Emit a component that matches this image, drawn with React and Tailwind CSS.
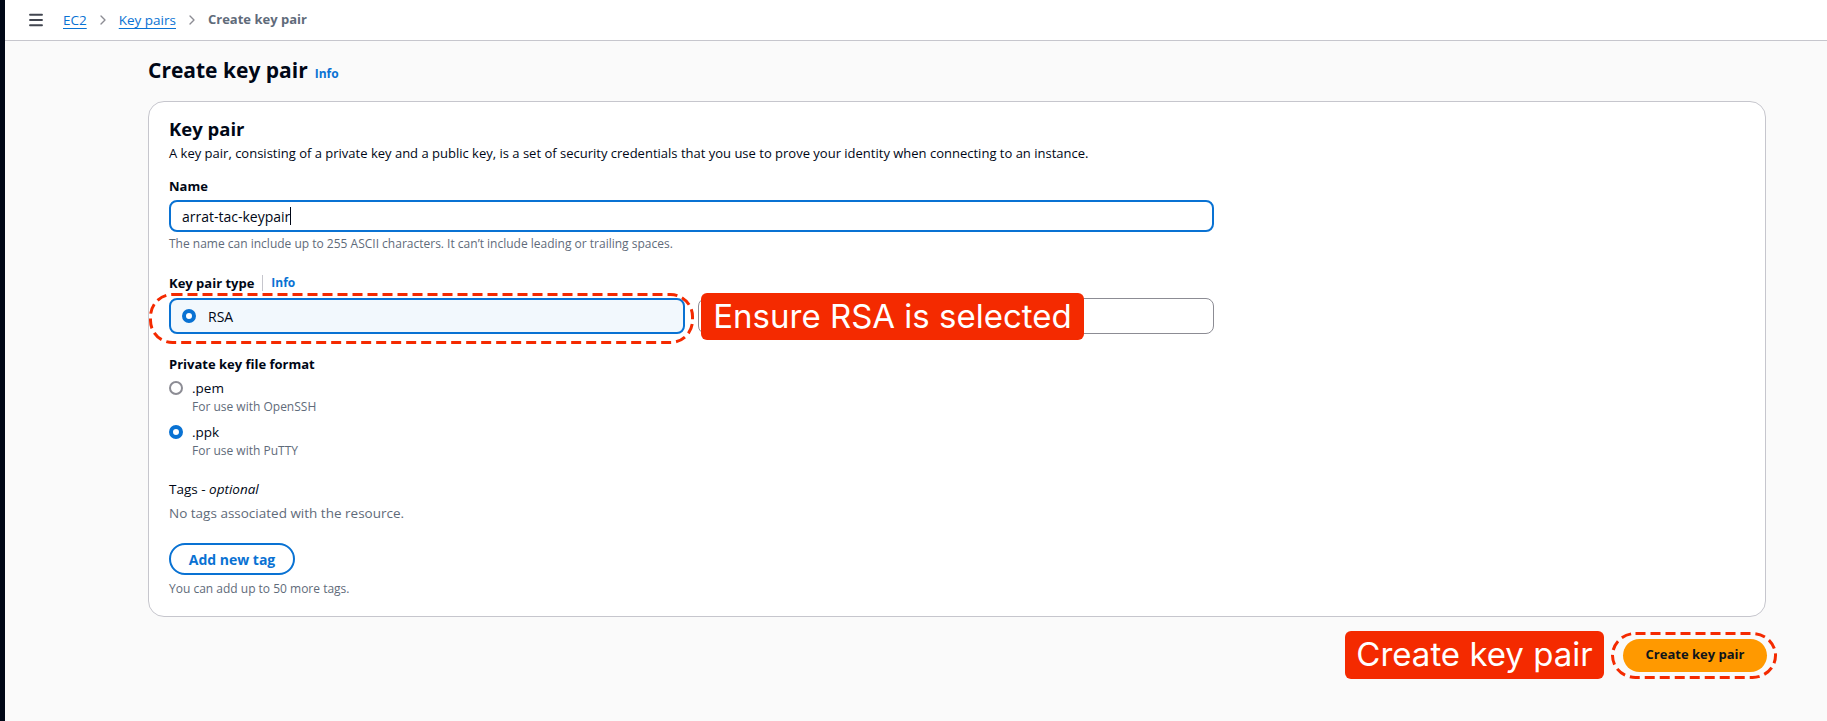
import React from 'react'
import { ChevronRight, Menu } from 'lucide-react'

const Dashed = ({ w, h, r }) => (
  <svg width={w} height={h} className="block">
    <rect
      x="1.5"
      y="1.5"
      width={w - 3}
      height={h - 3}
      rx={r}
      fill="none"
      stroke="#f42a00"
      strokeWidth="3"
      strokeDasharray="10 5"
    />
  </svg>
)

const Radio = ({ checked }) =>
  checked ? (
    <span className="block w-[14px] h-[14px] shrink-0 rounded-full border-[4px] border-[#0972d3] bg-white" />
  ) : (
    <span className="block w-[14px] h-[14px] shrink-0 rounded-full border-2 border-[#8c8c94] bg-white" />
  )

const App = () => {
  const crumbs = [
    { label: 'EC2', link: true },
    { label: 'Key pairs', link: true },
    { label: 'Create key pair', link: false },
  ]

  const formats = [
    { label: '.pem', hint: 'For use with OpenSSH', checked: false },
    { label: '.ppk', hint: 'For use with PuTTY', checked: true },
  ]

  return (
    <div className="flex min-h-[721px] w-full bg-[#fafafa] text-[#000716] font-['Open_Sans',sans-serif]">
      <div className="w-[5px] shrink-0 bg-[#000716]" />

      <div className="flex-1 flex flex-col">
        {/* top bar */}
        <header className="h-[41px] bg-white border-b border-[#c6c6cd] flex items-center pl-[22px]">
          <Menu className="w-[18px] h-[18px] text-[#424650]" strokeWidth={2.5} />
          <nav className="flex items-center ml-[18px] text-[13.5px]">
            {crumbs.map((c, i) => (
              <React.Fragment key={c.label}>
                {i > 0 && <ChevronRight className="w-[16px] h-[16px] mx-[8px] text-[#8c8c94]" strokeWidth={2} />}
                {c.link ? (
                  <span className="text-[#0972d3] underline underline-offset-[3px]">{c.label}</span>
                ) : (
                  <span className="text-[#5f6b7a] font-bold text-[13px]">{c.label}</span>
                )}
              </React.Fragment>
            ))}
          </nav>
        </header>

        <main className="pl-[143px] pr-[61px] pt-[15px]">
          <div className="flex items-baseline gap-[7px]">
            <h1 className="text-[21px] leading-[28px] font-bold">Create key pair</h1>
            <span className="text-[12px] font-bold text-[#0972d3]">Info</span>
          </div>

          {/* card */}
          <section className="mt-[17px] bg-white border border-[#c6c6cd] rounded-[16px] px-[20px] pt-[15px] pb-[19px]">
            <h2 className="text-[18.5px] leading-[24px] font-bold">Key pair</h2>
            <p className="mt-[2px] text-[13px] leading-[20px]">
              A key pair, consisting of a private key and a public key, is a set of security credentials that you use to prove your identity when connecting to an instance.
            </p>

            <div className="mt-[13px] text-[13px] leading-[20px] font-bold">Name</div>
            <div className="mt-[4px] w-[1045px] h-[32px] rounded-[8px] border-2 border-[#0972d3] flex items-center pl-[11px] text-[14px]">
              <span>arrat-tac-keypair</span>
              <span className="inline-block w-px h-[18px] bg-[#000716]" />
            </div>
            <div className="mt-[4px] text-[12px] leading-[16px] text-[#5f6b7a]">
              The name can include up to 255 ASCII characters. It can’t include leading or trailing spaces.
            </div>

            <div className="mt-[21px] flex items-center text-[13px] leading-[20px]">
              <span className="font-bold">Key pair type</span>
              <span className="mx-[8px] w-px h-[16px] bg-[#c6c6cd]" />
              <span className="text-[12px] font-bold text-[#0972d3]">Info</span>
            </div>
            <div className="relative mt-[5px] w-[1045px] grid grid-cols-2 gap-[13px]">
              <div className="h-[36px] rounded-[8px] border-2 border-[#0972d3] bg-[#f2f8fd] flex items-center pl-[11px] gap-[12px] text-[14px]">
                <Radio checked />
                <span>RSA</span>
              </div>
              {/* second option sits under the callout */}
              <div className="h-[36px] rounded-[8px] border border-[#8c8c94] bg-white" />

              {/* annotations */}
              <div className="absolute left-[-20px] top-[-5px]">
                <Dashed w={545} h={51} r={22} />
              </div>
              <div className="absolute left-[532px] top-[-5px] w-[383px] h-[47px] rounded-[6px] bg-[#f42a00] text-white flex items-center justify-center text-[33px] font-['Inter',sans-serif]">
                Ensure RSA is selected
              </div>
            </div>

            <div className="mt-[20px] text-[13px] leading-[20px] font-bold">Private key file format</div>
            <div className="mt-[4px] flex flex-col gap-[7px]">
              {formats.map((f) => (
                <div key={f.label}>
                  <div className="flex items-center gap-[9px] text-[13.5px] leading-[20px]">
                    <Radio checked={f.checked} />
                    <span>{f.label}</span>
                  </div>
                  <div className="pl-[23px] mt-px text-[12px] leading-[16px] text-[#5f6b7a]">{f.hint}</div>
                </div>
              ))}
            </div>

            <div className="mt-[20px] text-[13.5px] leading-[20px]">
              Tags - <i>optional</i>
            </div>
            <div className="mt-[4px] text-[13.5px] leading-[20px] text-[#5f6b7a]">No tags associated with the resource.</div>

            <button className="mt-[20px] w-[126px] h-[32px] rounded-full border-2 border-[#0972d3] text-[#0972d3] text-[14px] font-bold flex items-center justify-center">
              Add new tag
            </button>
            <div className="mt-[6px] text-[12px] leading-[16px] text-[#5f6b7a]">You can add up to 50 more tags.</div>
          </section>

          {/* footer actions */}
          <div className="mt-[14px] flex items-center justify-end gap-[19px]">
            <div className="w-[259px] h-[48px] rounded-[6px] bg-[#f42a00] text-white flex items-center justify-center text-[33px] font-['Inter',sans-serif]">
              Create key pair
            </div>
            <div className="relative -mr-px">
              <button className="w-[144px] h-[33px] rounded-full bg-[#ff9900] text-[#0f141a] text-[13px] font-bold">
                Create key pair
              </button>
              <div className="absolute left-[-12px] top-[-7px]">
                <Dashed w={166} h={47} r={23} />
              </div>
            </div>
          </div>
        </main>
      </div>
    </div>
  )
}

export default App
